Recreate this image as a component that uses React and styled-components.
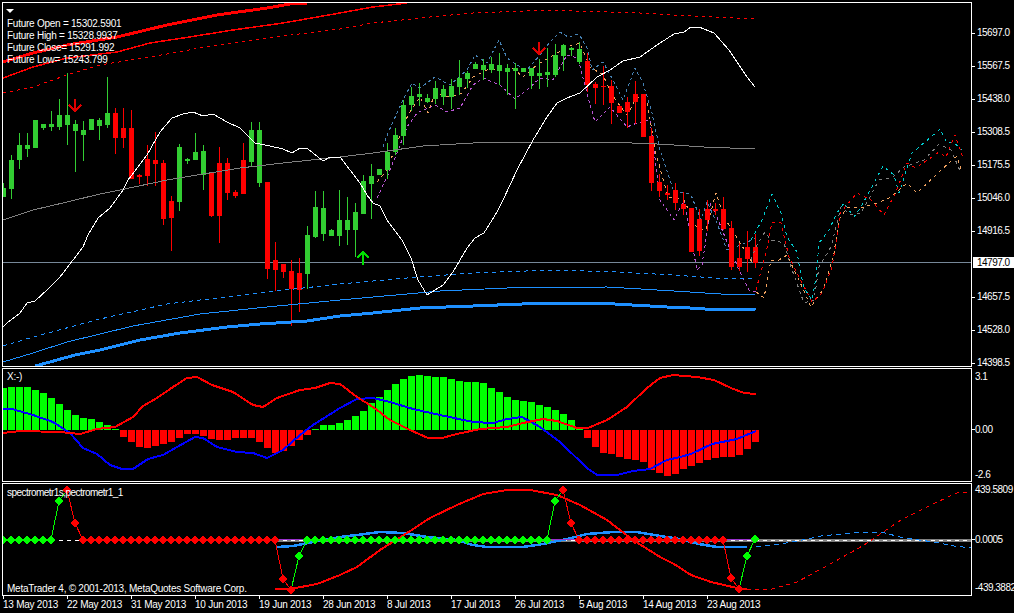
import React from 'react';
import styled, { createGlobalStyle } from 'styled-components';

const GlobalStyle = createGlobalStyle`
  html, body { margin: 0; padding: 0; background: #000; overflow: hidden; }
`;

const Terminal = styled.div`
  width: 1014px;
  height: 613px;
  padding: 2px 0 0 2px;
  box-sizing: border-box;
  background: #000;
  color: #fff;
  font: 10px/11px "Liberation Sans", Arial, sans-serif;
  letter-spacing: -0.25px;
  overflow: hidden;
  display: flex;
  flex-direction: column;
  gap: 1px;
`;

const PaneRow = styled.section`
  display: flex;
  height: ${(p) => p.$height}px;
  flex: none;
`;

const Plot = styled.div`
  position: relative;
  flex: none;
  width: 970px;
  box-sizing: border-box;
  border: 1px solid #fff;
  overflow: hidden;
`;

const ChartSvg = styled.svg`
  display: block;
  width: 968px;
  height: 100%;
  shape-rendering: crispEdges;
`;

const Legend = styled.div`
  position: absolute;
  left: 4px;
  top: 6px;
  line-height: 12px;
`;

const MenuTriangle = styled.div`
  width: 0;
  height: 0;
  margin: 0 0 5px -1px;
  border-left: 4px solid transparent;
  border-right: 4px solid transparent;
  border-top: 4px solid #fff;
`;

const PaneCaption = styled.div`
  position: absolute;
  left: 4px;
  line-height: 12px;
  white-space: nowrap;
  letter-spacing: ${(p) => (p.$tight ? '-0.55px' : 'inherit')};
  ${(p) => (p.$bottom !== undefined ? `bottom: ${p.$bottom}px;` : `top: ${p.$top}px;`)}
`;

const PriceAxis = styled.div`
  position: relative;
  flex: none;
  width: 42px;
  display: grid;
  grid-template-rows: ${(p) => p.$rows};
  padding-top: ${(p) => p.$pad}px;
  box-sizing: border-box;
  letter-spacing: -0.5px;
`;

const AxisLabel = styled.div`
  display: flex;
  align-items: center;
  gap: 2px;
  height: 11px;
  white-space: nowrap;
  &::before {
    content: '';
    flex: none;
    width: 3px;
    height: 1px;
    margin-top: 2px;
    background: #fff;
  }
`;

const SubAxisLabel = styled.div`
  display: flex;
  align-items: center;
  height: 11px;
  white-space: nowrap;
  &::before {
    content: '';
    flex: none;
    width: 3px;
    height: 1px;
    background: ${(p) => (p.$tick ? '#fff' : 'transparent')};
  }
`;

const CurrentPrice = styled.div`
  position: absolute;
  left: 1px;
  top: 255px;
  width: 41px;
  height: 11px;
  padding-left: 4px;
  box-sizing: border-box;
  background: #fff;
  color: #000;
`;

const TimeAxis = styled.div`
  flex: none;
  margin-top: -1px;
  padding-left: 1px;
  display: grid;
  grid-template-columns: repeat(12, 64px);
`;

const TimeLabel = styled.div`
  white-space: nowrap;
  line-height: 12px;
  &::before {
    content: '';
    display: block;
    width: 1px;
    height: 3px;
    background: #fff;
  }
`;

// [color, bodyTop, bodyBottom, high, low], one per bar, bars are 8px apart from x=3
const CANDLES = [
  ['g',188,197,183,197],['g',160,189,155,199],['g',145,160,133,169],['g',145,149,133,157],
  ['g',120,148,120,148],['g',124,128,124,130],['g',124,127,111,131],['g',115,127,99,130],
  ['g',115,125,73,145],['g',124,131,120,172],['g',130,135,121,161],['g',119,130,119,130],
  ['g',120,126,118,140],['g',113,125,77,128],['r',113,138,108,154],['r',128,138,108,148],
  ['r',128,179,110,179],['r',175,177,174,184],['r',159,176,145,186],['r',160,164,132,186],
  ['r',163,219,160,225],['r',201,218,196,251],['g',147,202,144,211],['g',159,161,158,164],
  ['g',152,160,133,160],['g',151,175,145,190],['r',173,216,173,217],['r',163,216,147,243],
  ['r',163,193,158,200],['r',192,196,190,198],['r',160,194,143,194],['g',130,162,122,167],
  ['g',130,183,122,187],['r',182,269,182,279],['r',260,270,242,291],['r',264,272,264,278],
  ['r',271,289,260,326],['r',273,290,258,312],['g',235,274,226,289],['g',207,237,191,238],
  ['g',208,234,191,241],['g',230,236,229,236],['g',220,236,190,246],['g',220,230,197,245],
  ['g',212,230,203,257],['g',181,214,175,214],['g',176,184,164,219],['g',169,175,169,175],
  ['g',152,170,143,179],['g',135,152,128,155],['g',105,136,100,145],['g',96,105,87,111],
  ['g',94,97,83,106],['g',98,102,94,103],['g',88,99,81,104],['g',89,97,85,105],
  ['g',86,97,79,109],['g',78,87,60,95],['g',73,79,71,88],['g',64,69,62,69],
  ['g',65,70,59,80],['g',64,70,57,73],['g',65,71,53,85],['g',68,72,64,95],
  ['g',68,71,63,109],['g',68,72,68,72],['g',68,76,68,89],['g',73,76,59,89],
  ['g',72,75,48,87],['g',55,75,44,77],['g',45,56,44,71],['g',48,50,47,56],
  ['g',49,62,42,64],['r',61,85,53,92],['r',84,88,82,104],['r',86,87,66,105],
  ['r',86,103,80,124],['r',106,113,105,113],['r',102,112,97,128],['r',94,102,81,124],
  ['r',94,137,94,137],['r',136,183,128,191],['r',182,191,174,197],['r',193,195,185,200],
  ['r',190,203,183,210],['r',204,209,192,215],['r',208,252,208,252],['r',219,251,209,256],
  ['r',209,220,200,231],['r',209,211,203,215],['r',209,229,197,230],['r',228,267,221,270],
  ['r',258,267,243,271],['r',247,259,231,272],['r',247,263,234,268],
];

const MA_WHITE = '3,327 7,323 20,313 27,303 35,301 48,289 60,277 73,260 83,247 88,235 98,218 110,208 123,190 128,180 147,155 160,132 172,118 183,114 193,112 203,116 213,114 227,122 240,128 255,143 270,146 283,149 292,153 300,148 308,149 323,161 330,157 340,157 350,170 360,183 367,195 373,203 380,206 387,220 402,240 411,258 418,280 427,295 443,285 453,272 467,248 475,238 484,233 497,212 503,200 517,170 533,140 547,117 557,103 567,98 580,93 597,77 610,70 623,61 640,57 657,45 674,34 684,32 691,27 699,27 714,33 729,50 739,65 747,77 755,87';
const MA_GRAY = '3,220 33,210 67,202 100,194 120,190 167,180 240,168 283,163 340,157 373,153 423,146 473,143 503,142 607,142 657,144 674,145 704,147 755,149';
const RED_THICK = '3,62 33,53 67,45 117,37 167,25 217,15 267,8 290,4 307,3';
const RED_MID = '3,78 33,67 67,58 117,52 150,43 183,38 233,30 283,23 340,13 373,7 407,3';
const RED_DASH = '3,93 33,87 67,75 100,65 150,57 200,48 267,38 340,29 373,23 440,16 473,13 527,11 543,10 607,12 640,13 674,15 755,19';
const BLUE_THICK = '35,366 50,362 75,355 100,350 140,340 180,333 227,327 260,324 307,321 340,316 373,313 420,308 473,306 547,303 597,303 667,307 674,307 721,310 756,309';
const BLUE_MID = '3,362 33,353 67,342 133,326 200,314 267,307 340,300 373,297 407,294 440,291 507,288 607,287 674,291 721,294 755,294';
const BLUE_DASH = '3,346 33,337 100,319 167,304 267,292 340,284 407,278 473,273 553,270 617,272 674,275 714,278 755,278';

const BAND_UP = '383,147 388,133 403,100 412,83 420,88 435,77 450,85 467,70 475,55 487,63 499,40 507,58 517,65 527,70 540,55 550,42 560,32 568,37 579,34 588,50 592,70 603,62 613,80 623,100 635,68 643,83 652,113 660,150 674,192 684,192 691,195 701,220 707,202 717,223 727,250 741,245 756,238';
const BAND_LOW = '377,198 387,177 397,153 407,127 417,113 435,105 447,112 460,108 473,85 483,78 500,85 515,99 527,90 540,78 553,80 567,55 578,58 588,97 595,122 610,107 627,127 637,123 650,120 657,173 660,200 674,220 684,200 690,233 697,270 702,265 707,233 711,203 717,217 729,247 739,270 749,290 756,292';
const BAND_MID = '377,182 387,170 397,143 408,115 420,97 428,113 435,93 450,97 462,93 473,77 487,70 513,68 523,77 537,65 567,47 580,43 590,67 603,75 612,95 627,115 637,97 647,100 655,150 668,197 684,200 697,228 706,230 716,193 724,217 752,262';

const FC_CYAN = '751,240 762,220 772,194 781,213 787,237 797,252 800,270 804,288 812,300 816,278 819,243 829,230 837,213 844,203 854,217 861,207 874,183 883,166 894,175 899,193 912,153 931,137 940,129 947,143 953,142 962,150';
const FC_GRAY = '751,260 756,247 765,232 771,240 784,243 791,267 804,303 814,300 819,267 831,247 841,207 851,215 861,213 871,195 879,180 892,178 904,167 924,160 939,144 951,150 961,173';
const FC_RED = '756,290 766,253 772,222 781,223 789,257 799,277 812,302 822,293 832,267 841,212 857,193 871,200 884,215 896,192 907,163 916,168 939,152 946,157 955,135 963,158';
const FC_ORANGE = '756,292 764,298 771,260 779,260 787,255 799,280 811,307 824,288 834,253 839,220 847,207 864,207 877,203 891,197 907,183 917,193 941,170 957,156 962,172';

const MACD_BARS = [69,66,66,66,75,84,99,117,135,150,159,162,171,180,192,216,231,246,249,243,237,231,219,207,207,213,222,225,225,219,219,219,231,249,264,258,243,225,210,192,180,180,174,165,153,138,114,96,75,57,42,33,30,33,36,36,42,48,51,51,54,69,81,96,105,108,111,120,126,135,147,165,186,219,246,264,267,276,282,285,291,315,324,333,327,312,303,294,285,279,276,276,270,252,231];

const MACD_RED = '3,433 20,431 60,432 80,434 97,429 115,427 133,417 143,406 157,398 173,387 187,378 197,377 212,385 233,392 253,405 263,407 277,398 300,390 315,388 330,383 340,384 357,397 373,407 390,420 410,430 428,438 442,438 457,434 480,429 507,427 523,423 543,419 557,421 577,428 588,428 607,420 627,407 647,388 660,378 673,375 697,377 714,380 731,388 744,393 756,394';
const MACD_BLUE = '3,409 12,409 33,415 53,422 70,433 83,448 97,454 110,465 122,469 133,469 148,459 163,455 177,447 195,437 203,438 217,447 237,452 253,453 267,458 283,450 300,435 313,425 340,408 357,399 373,398 390,402 413,409 440,415 473,422 493,423 507,419 522,417 540,427 560,442 587,468 597,475 617,475 633,471 650,469 667,460 680,457 691,454 712,444 737,439 756,431';

const SPEC_RED = '275,589 290,589 317,584 340,575 357,567 380,550 407,533 430,518 457,505 483,494 507,490 530,490 557,495 580,505 607,520 633,540 660,557 674,564 691,575 711,582 737,588 747,589';
const SPEC_RED_DASH = '747,589 772,589 797,582 834,562 864,545 901,520 937,502 957,493 971,492';
const SPEC_BLUE = '277,547 293,546 313,542 340,537 357,535 380,532 403,533 427,537 457,540 473,545 487,547 523,547 543,544 567,539 587,534 613,532 637,532 660,536 680,539 699,544 717,547 747,547';
const SPEC_BLUE_DASH = '756,547 781,544 807,539 821,536 851,533 881,532 904,538 934,542 954,546 971,548';

const barRun = (a, b) => { const o = []; for (let x = a; x <= b; x += 8) o.push(x); return o; };
const DIAMONDS = [
  ...barRun(3, 51).map((x) => [x, 540, 'g']),
  [59, 501, 'g'], [67, 490, 'r'], [75, 523, 'r'],
  ...barRun(83, 275).map((x) => [x, 540, 'r']),
  [283, 579, 'r'], [291, 590, 'r'], [299, 556, 'g'],
  ...barRun(307, 547).map((x) => [x, 540, 'g']),
  [555, 501, 'g'], [563, 490, 'r'], [571, 523, 'r'],
  ...barRun(579, 723).map((x) => [x, 540, 'r']),
  [731, 578, 'r'], [739, 589, 'r'], [747, 556, 'g'], [755, 539, 'g'],
];

const SPEC_LINKS = [
  ['#00ff00', '51,540 59,501 67,490'], ['#ff0000', '67,490 75,523 83,540'],
  ['#ff0000', '275,540 283,579 291,590'], ['#00ff00', '291,590 299,556 307,540'],
  ['#00ff00', '547,540 555,501 563,490'], ['#ff0000', '563,490 571,523 579,540'],
  ['#ff0000', '723,540 731,578 739,589'], ['#00ff00', '739,589 747,556 755,539'],
];

const Curve = ({ points, color, width = 1, dash }) => (
  <polyline points={points} fill="none" stroke={color} strokeWidth={width} strokeDasharray={dash} />
);

const MainChart = () => (
  <ChartSvg viewBox="3 3 968 363">
    <rect x="3" y="262" width="968" height="1" fill="#778899" />
    <Curve points={BAND_UP} color="#4682b4" dash="3 3" />
    <Curve points={BAND_LOW} color="#ba55d3" dash="3 3" />
    <Curve points={BAND_MID} color="#f4a460" dash="3 4" />
    {CANDLES.map(([c, top, bottom, hi, lo], i) => {
      const x = 3 + i * 8;
      const fill = c === 'g' ? '#32cd32' : '#ff0000';
      return (
        <g key={x} fill={fill}>
          <rect x={x} y={hi} width="1" height={lo - hi} />
          <rect x={x - 2} y={top} width="5" height={bottom - top} />
        </g>
      );
    })}
    <Curve points={FC_CYAN} color="#00ced1" dash="3 4" />
    <Curve points={FC_GRAY} color="#808080" dash="3 4" />
    <Curve points={FC_ORANGE} color="#f4a460" dash="3 4" />
    <Curve points={FC_RED} color="#ff0000" dash="3 4" />
    <Curve points={RED_THICK} color="#ff0000" width={3} />
    <Curve points={RED_MID} color="#ff0000" width={1.5} />
    <Curve points={RED_DASH} color="#ff0000" dash="3 4" />
    <Curve points={BLUE_THICK} color="#1e90ff" width={3} />
    <Curve points={BLUE_MID} color="#1e90ff" />
    <Curve points={BLUE_DASH} color="#1e90ff" dash="4 4" />
    <Curve points={MA_GRAY} color="#808080" />
    <Curve points={MA_WHITE} color="#ffffff" />
    <path d="M75 99V111M69 105L75 111L81 105" fill="none" stroke="#e00000" strokeWidth="2" />
    <path d="M539 42V54M533 48L539 54L545 48" fill="none" stroke="#e00000" strokeWidth="2" />
    <path d="M363 265V253M357 258L363 252L369 258" fill="none" stroke="#00e000" strokeWidth="2" />
  </ChartSvg>
);

const MacdChart = () => (
  <ChartSvg viewBox="3 369 968 112">
    {MACD_BARS.map((z, i) => {
      const x = 3 + i * 8;
      const y = 365 + z / 3;
      const up = y < 430;
      return (
        <rect
          key={x}
          x={x - 3}
          y={up ? y : 430}
          width="7"
          height={Math.abs(y - 430)}
          fill={up ? '#00ff00' : '#ff0000'}
        />
      );
    })}
    <Curve points={MACD_BLUE} color="#0000ff" width={2} />
    <Curve points={MACD_RED} color="#ff0000" width={2} />
  </ChartSvg>
);

const SpectrumChart = () => (
  <ChartSvg viewBox="3 484 968 111">
    <rect x="275" y="539" width="696" height="3" fill="#808080" />
    <line x1="3" y1="540.5" x2="971" y2="540.5" stroke="#fff" strokeDasharray="4 4" />
    <Curve points={SPEC_BLUE} color="#1e90ff" width={2.5} />
    <Curve points={SPEC_BLUE_DASH} color="#1e90ff" dash="5 4" />
    <Curve points={SPEC_RED} color="#ff0000" width={2} />
    <Curve points={SPEC_RED_DASH} color="#ff0000" dash="4 4" />
    <rect x="275" y="539" width="28" height="1" fill="#9932cc" />
    <rect x="547" y="539" width="32" height="1" fill="#9932cc" />
    <rect x="723" y="539" width="32" height="1" fill="#9932cc" />
    {SPEC_LINKS.map(([color, pts]) => (
      <Curve key={pts} points={pts} color={color} />
    ))}
    {DIAMONDS.map(([x, y, c]) => (
      <polygon
        key={`${x}-${y}`}
        points={`${x - 5},${y} ${x - 0.5},${y - 4.5} ${x + 4},${y} ${x - 0.5},${y + 4.5}`}
        fill={c === 'g' ? '#00ff00' : '#ff0000'}
      />
    ))}
  </ChartSvg>
);

const MAIN_PRICES = ['15697.0', '15567.5', '15438.0', '15308.5', '15175.5', '15046.0', '14916.5', '', '14657.5', '14528.0', '14398.5'];
const DATES = ['13 May 2013', '22 May 2013', '31 May 2013', '10 Jun 2013', '19 Jun 2013', '28 Jun 2013', '8 Jul 2013', '17 Jul 2013', '26 Jul 2013', '5 Aug 2013', '14 Aug 2013', '23 Aug 2013'];
const FUTURES = ['Future Open = 15302.5901', 'Future High = 15328.9937', 'Future Close= 15291.992', 'Future Low= 15243.799'];

export default function App() {
  return (
    <Terminal>
      <GlobalStyle />
      <PaneRow $height={365}>
        <Plot>
          <MainChart />
          <Legend>
            <MenuTriangle />
            {FUTURES.map((t) => (
              <div key={t}>{t}</div>
            ))}
          </Legend>
        </Plot>
        <PriceAxis $pad={25} $rows="repeat(11, 33px)">
          {MAIN_PRICES.map((p, i) => (p ? <AxisLabel key={p}>{p}</AxisLabel> : <span key={i} />))}
          <CurrentPrice>14797.0</CurrentPrice>
        </PriceAxis>
      </PaneRow>
      <PaneRow $height={114}>
        <Plot>
          <MacdChart />
          <PaneCaption $top={2}>X:-)</PaneCaption>
        </Plot>
        <PriceAxis $pad={3} $rows="53px 45px 11px">
          <SubAxisLabel>3.1</SubAxisLabel>
          <SubAxisLabel $tick>0.00</SubAxisLabel>
          <SubAxisLabel>-2.6</SubAxisLabel>
        </PriceAxis>
      </PaneRow>
      <PaneRow $height={113}>
        <Plot>
          <SpectrumChart />
          <PaneCaption $top={3} $tight>spectrometr1s,pectrometr1_1</PaneCaption>
          <PaneCaption $bottom={0}>MetaTrader 4, © 2001-2013, MetaQuotes Software Corp.</PaneCaption>
        </Plot>
        <PriceAxis $pad={1} $rows="50px 48px 11px">
          <SubAxisLabel>439.5809</SubAxisLabel>
          <SubAxisLabel $tick>0.0005</SubAxisLabel>
          <SubAxisLabel>-439.3882</SubAxisLabel>
        </PriceAxis>
      </PaneRow>
      <TimeAxis>
        {DATES.map((d) => (
          <TimeLabel key={d}>{d}</TimeLabel>
        ))}
      </TimeAxis>
    </Terminal>
  );
}
